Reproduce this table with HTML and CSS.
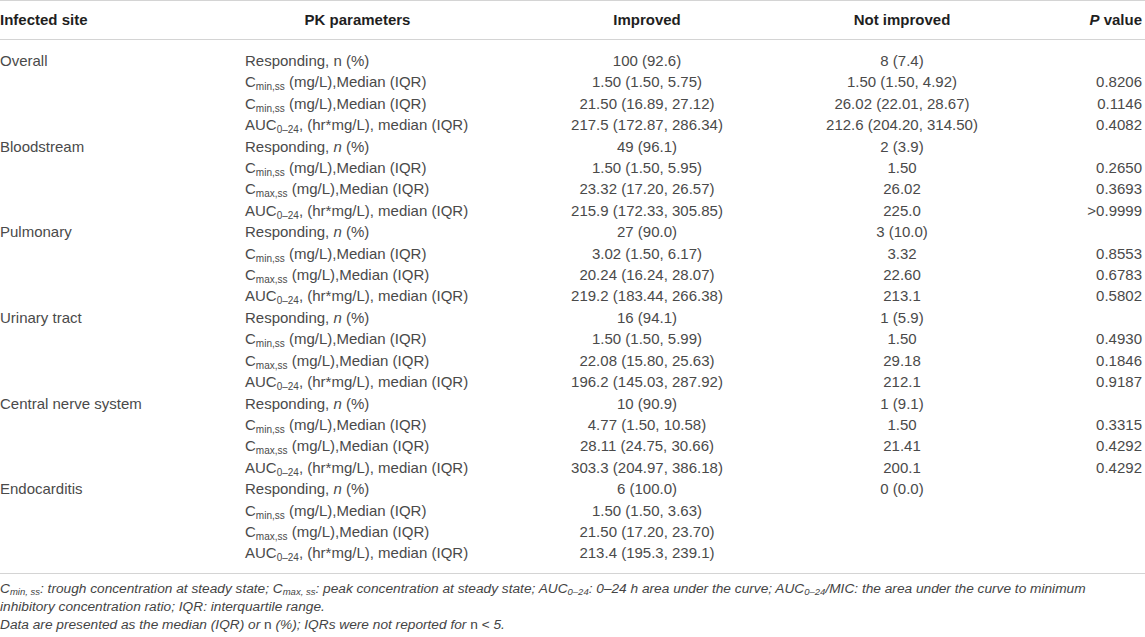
FILE: index.html
```html
<!DOCTYPE html>
<html>
<head>
<meta charset="utf-8">
<link rel="stylesheet" href="styles.css">
</head>
<body>
<table class="pk">
<colgroup>
<col class="c1"><col class="c2"><col class="c3"><col class="c4"><col class="c5">
</colgroup>
<thead>
<tr><th class="l">Infected site</th><th class="c">PK parameters</th><th class="c">Improved</th><th class="c">Not improved</th><th class="r"><i>P</i> value</th></tr>
</thead>
<tbody class="first">
<tr><td>Overall</td><td>Responding, n (%)</td><td class="c">100 (92.6)</td><td class="c">8 (7.4)</td><td class="r"></td></tr>
<tr><td></td><td>C<sub>min,ss</sub> (mg/L),Median (IQR)</td><td class="c">1.50 (1.50, 5.75)</td><td class="c">1.50 (1.50, 4.92)</td><td class="r">0.8206</td></tr>
<tr><td></td><td>C<sub>min,ss</sub> (mg/L),Median (IQR)</td><td class="c">21.50 (16.89, 27.12)</td><td class="c">26.02 (22.01, 28.67)</td><td class="r">0.1146</td></tr>
<tr><td></td><td>AUC<sub>0–24</sub>, (hr*mg/L), median (IQR)</td><td class="c">217.5 (172.87, 286.34)</td><td class="c">212.6 (204.20, 314.50)</td><td class="r">0.4082</td></tr>
<tr><td>Bloodstream</td><td>Responding, <i>n</i> (%)</td><td class="c">49 (96.1)</td><td class="c">2 (3.9)</td><td class="r"></td></tr>
<tr><td></td><td>C<sub>min,ss</sub> (mg/L),Median (IQR)</td><td class="c">1.50 (1.50, 5.95)</td><td class="c">1.50</td><td class="r">0.2650</td></tr>
<tr><td></td><td>C<sub>max,ss</sub> (mg/L),Median (IQR)</td><td class="c">23.32 (17.20, 26.57)</td><td class="c">26.02</td><td class="r">0.3693</td></tr>
<tr><td></td><td>AUC<sub>0–24</sub>, (hr*mg/L), median (IQR)</td><td class="c">215.9 (172.33, 305.85)</td><td class="c">225.0</td><td class="r">&gt;0.9999</td></tr>
<tr><td>Pulmonary</td><td>Responding, <i>n</i> (%)</td><td class="c">27 (90.0)</td><td class="c">3 (10.0)</td><td class="r"></td></tr>
<tr><td></td><td>C<sub>min,ss</sub> (mg/L),Median (IQR)</td><td class="c">3.02 (1.50, 6.17)</td><td class="c">3.32</td><td class="r">0.8553</td></tr>
<tr><td></td><td>C<sub>max,ss</sub> (mg/L),Median (IQR)</td><td class="c">20.24 (16.24, 28.07)</td><td class="c">22.60</td><td class="r">0.6783</td></tr>
<tr><td></td><td>AUC<sub>0–24</sub>, (hr*mg/L), median (IQR)</td><td class="c">219.2 (183.44, 266.38)</td><td class="c">213.1</td><td class="r">0.5802</td></tr>
<tr><td>Urinary tract</td><td>Responding, <i>n</i> (%)</td><td class="c">16 (94.1)</td><td class="c">1 (5.9)</td><td class="r"></td></tr>
<tr><td></td><td>C<sub>min,ss</sub> (mg/L),Median (IQR)</td><td class="c">1.50 (1.50, 5.99)</td><td class="c">1.50</td><td class="r">0.4930</td></tr>
<tr><td></td><td>C<sub>max,ss</sub> (mg/L),Median (IQR)</td><td class="c">22.08 (15.80, 25.63)</td><td class="c">29.18</td><td class="r">0.1846</td></tr>
<tr><td></td><td>AUC<sub>0–24</sub>, (hr*mg/L), median (IQR)</td><td class="c">196.2 (145.03, 287.92)</td><td class="c">212.1</td><td class="r">0.9187</td></tr>
<tr><td>Central nerve system</td><td>Responding, <i>n</i> (%)</td><td class="c">10 (90.9)</td><td class="c">1 (9.1)</td><td class="r"></td></tr>
<tr><td></td><td>C<sub>min,ss</sub> (mg/L),Median (IQR)</td><td class="c">4.77 (1.50, 10.58)</td><td class="c">1.50</td><td class="r">0.3315</td></tr>
<tr><td></td><td>C<sub>max,ss</sub> (mg/L),Median (IQR)</td><td class="c">28.11 (24.75, 30.66)</td><td class="c">21.41</td><td class="r">0.4292</td></tr>
<tr><td></td><td>AUC<sub>0–24</sub>, (hr*mg/L), median (IQR)</td><td class="c">303.3 (204.97, 386.18)</td><td class="c">200.1</td><td class="r">0.4292</td></tr>
<tr><td>Endocarditis</td><td>Responding, <i>n</i> (%)</td><td class="c">6 (100.0)</td><td class="c">0 (0.0)</td><td class="r"></td></tr>
<tr><td></td><td>C<sub>min,ss</sub> (mg/L),Median (IQR)</td><td class="c">1.50 (1.50, 3.63)</td><td class="c"></td><td class="r"></td></tr>
<tr><td></td><td>C<sub>max,ss</sub> (mg/L),Median (IQR)</td><td class="c">21.50 (17.20, 23.70)</td><td class="c"></td><td class="r"></td></tr>
<tr class="last"><td></td><td>AUC<sub>0–24</sub>, (hr*mg/L), median (IQR)</td><td class="c">213.4 (195.3, 239.1)</td><td class="c"></td><td class="r"></td></tr>
</tbody>
</table>
<div class="notes">
<p>C<sub>min, ss</sub>: trough concentration at steady state; C<sub>max, ss</sub>: peak concentration at steady state; AUC<sub>0–24</sub>: 0–24 h area under the curve; AUC<sub>0–24</sub>/MIC: the area under the curve to minimum inhibitory concentration ratio; IQR: interquartile range.</p>
<p>Data are presented as the median (IQR) or <span class="up">n</span> (%); IQRs were not reported for <span class="up">n</span> &lt; 5.</p>
</div>
</body>
</html>
```

FILE: styles.css
```css
html, body {
  margin: 0;
  padding: 0;
  background: #fff;
}
body {
  font-family: "Liberation Sans", Arial, sans-serif;
  color: #4a4a4a;
  width: 1145px;
}
.pk {
  width: 1145px;
  border-collapse: collapse;
  table-layout: fixed;
  font-size: 15px;
  border-top: 1px solid #d4d4d4;
  border-bottom: 1px solid #d4d4d4;
}
.c1 { width: 245px; }
.c2 { width: 225px; }
.c3 { width: 354px; }
.c4 { width: 156px; }
.c5 { width: 165px; }
.pk th {
  font-weight: bold;
  color: #1f1f1f;
  height: 38px;
  padding: 0;
  line-height: 18px;
  border-bottom: 1px solid #d4d4d4;
  white-space: nowrap;
}
.pk td {
  padding: 0;
  height: 21.4px;
  line-height: 21.4px;
  white-space: nowrap;
  vertical-align: middle;
}
.pk tbody tr:first-child td {
  padding-top: 10px;
}
.pk tr.last td {
  padding-bottom: 9px;
}
.l { text-align: left; }
.c { text-align: center; }
.r { text-align: right; padding-right: 3px !important; }
sub {
  font-size: 10px;
  line-height: 0;
  vertical-align: -3px;
}
.notes {
  font-size: 13.7px;
  font-style: italic;
  color: #444;
  padding-top: 6px;
  width: 1120px;
}
.notes p {
  margin: 0;
  line-height: 18px;
}
.notes sub {
  font-size: 9.5px;
  vertical-align: -2px;
}
.up { font-style: normal; }
```
